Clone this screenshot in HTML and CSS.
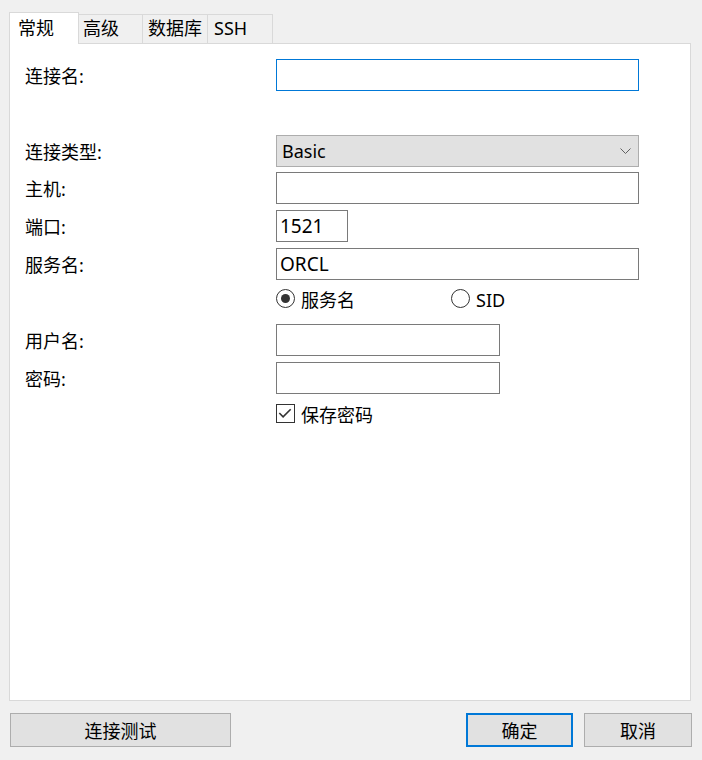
FILE: index.html
```html
<!DOCTYPE html>
<html lang="zh-CN">
<head>
<meta charset="utf-8">
<title>连接</title>
<link rel="stylesheet" href="styles.css">
</head>
<body>
<div class="window">
  <div class="tabs">
    <div class="tab tab-active tab-1">常规</div>
    <div class="tab tab-2">高级</div>
    <div class="tab tab-3">数据库</div>
    <div class="tab tab-4">SSH</div>
  </div>
  <div class="panel">
    <div class="row row-name">
      <label class="label">连接名:</label>
      <input class="field field-wide field-focus" type="text" value="">
    </div>
    <div class="row row-type">
      <label class="label">连接类型:</label>
      <div class="combo field-wide">
        <span class="combo-text">Basic</span>
        <svg class="chevron" width="11" height="6" viewBox="0 0 11 6"><polyline points="0.5,0.5 5.5,5.5 10.5,0.5" fill="none" stroke="#606060" stroke-width="1"/></svg>
      </div>
    </div>
    <div class="row row-host">
      <label class="label">主机:</label>
      <input class="field field-wide" type="text" value="">
    </div>
    <div class="row row-port">
      <label class="label">端口:</label>
      <input class="field field-port" type="text" value="1521">
    </div>
    <div class="row row-service">
      <label class="label">服务名:</label>
      <input class="field field-wide" type="text" value="ORCL">
    </div>
    <div class="row row-radio">
      <span class="label"></span>
      <div class="radios">
        <div class="option option-first"><span class="radio radio-on"></span><span class="opt-text">服务名</span></div>
        <div class="option"><span class="radio"></span><span class="opt-text">SID</span></div>
      </div>
    </div>
    <div class="row row-user">
      <label class="label">用户名:</label>
      <input class="field field-mid" type="text" value="">
    </div>
    <div class="row row-pwd">
      <label class="label">密码:</label>
      <input class="field field-mid" type="password" value="">
    </div>
    <div class="row row-check">
      <span class="label"></span>
      <div class="option">
        <span class="checkbox"><svg width="19" height="19" viewBox="0 0 19 19"><polyline points="3.5,9 7.5,13 15.5,5" fill="none" stroke="#333" stroke-width="1.7"/></svg></span>
        <span class="opt-text">保存密码</span>
      </div>
    </div>
  </div>
  <div class="buttons">
    <button class="btn btn-test">连接测试</button>
    <div class="btn-group">
      <button class="btn btn-ok">确定</button>
      <button class="btn btn-cancel">取消</button>
    </div>
  </div>
</div>
</body>
</html>
```
FILE: styles.css
```css
html, body {
  margin: 0;
  padding: 0;
  background: #f0f0f0;
}
body {
  font-family: "Noto Sans", "Noto Sans CJK SC", sans-serif;
  font-size: 18px;
  color: #000;
}
.window {
  width: 702px;
  height: 760px;
  box-sizing: border-box;
  padding-top: 12px;
}
.tabs {
  display: flex;
  align-items: flex-end;
  height: 31px;
  margin-left: 9px;
}
.tab {
  box-sizing: border-box;
  height: 29px;
  border: 1px solid #d9d9d9;
  border-left: none;
  border-bottom: none;
  background: #f0f0f0;
  line-height: 27px;
  padding-left: 5px;
  white-space: nowrap;
}
.tab-active {
  position: relative;
  z-index: 1;
  height: 32px;
  margin-bottom: -1px;
  background: #fff;
  border-left: 1px solid #d9d9d9;
  line-height: 30px;
  padding-left: 8px;
}
.tab-1 { width: 70px; }
.tab-2 { width: 64px; padding-left: 4px; }
.tab-3 { width: 65px; }
.tab-4 { width: 65px; padding-left: 6px; }
.panel {
  box-sizing: border-box;
  margin-left: 9px;
  width: 682px;
  height: 658px;
  background: #fff;
  border: 1px solid #d9d9d9;
  padding: 15px 0 0 15px;
}
.row {
  display: flex;
  align-items: center;
}
.label {
  width: 251px;
  flex: none;
  line-height: 24px;
  padding-top: 2px;
}
.row-type { margin-top: 44px; }
.row-host { margin-top: 5px; }
.row-port { margin-top: 6px; }
.row-service { margin-top: 6px; }
.row-radio { margin-top: 9px; height: 18px; }
.row-user { margin-top: 17px; }
.row-pwd { margin-top: 6px; }
.row-check { margin-top: 10px; height: 18px; }
.field {
  box-sizing: border-box;
  height: 32px;
  margin: 0;
  border: 1px solid #7a7a7a;
  background: #fff;
  font: inherit;
  font-size: 19px;
  color: #000;
  padding: 0 3px;
  outline: none;
}
.field-wide { width: 363px; }
.field-port { width: 72px; }
.field-mid { width: 224px; }
.field-focus { border-color: #0078d7; }
.combo {
  box-sizing: border-box;
  height: 32px;
  border: 1px solid #adadad;
  background: #e1e1e1;
  display: flex;
  align-items: center;
  justify-content: space-between;
  padding: 0 7px 0 5px;
}
.chevron { display: block; }
.radios {
  display: flex;
  align-items: center;
}
.option {
  display: flex;
  align-items: center;
}
.option-first { width: 175px; }
.radio {
  box-sizing: border-box;
  width: 19px;
  height: 19px;
  border: 1px solid #333;
  border-radius: 50%;
  background: #fff;
  display: flex;
  align-items: center;
  justify-content: center;
  flex: none;
}
.radio-on::after {
  content: "";
  width: 9px;
  height: 9px;
  border-radius: 50%;
  background: #333;
}
.opt-text {
  margin-left: 6px;
  line-height: 24px;
  padding-top: 3px;
}
.checkbox {
  box-sizing: border-box;
  width: 19px;
  height: 19px;
  border: 1px solid #333;
  background: #fff;
  flex: none;
  display: flex;
}
.checkbox svg { display: block; margin: -1px 0 0 -1px; }
.buttons {
  display: flex;
  justify-content: space-between;
  margin: 12px 10px 0 10px;
}
.btn-group {
  display: flex;
  gap: 11px;
}
.btn {
  box-sizing: border-box;
  height: 34px;
  margin: 0;
  border: 1px solid #adadad;
  background: #e1e1e1;
  font: inherit;
  color: #000;
  padding: 0;
}
.btn-test { width: 221px; }
.btn-ok { width: 107px; border: 2px solid #0078d7; }
.btn-cancel { width: 108px; }
```
